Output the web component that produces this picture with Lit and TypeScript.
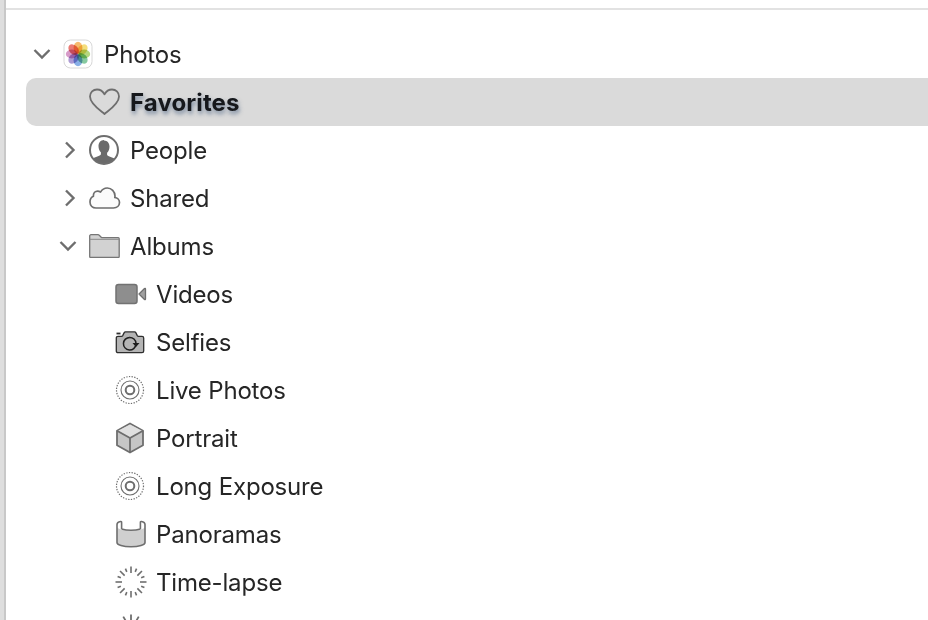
import { LitElement, html, css, svg } from "lit";
import { customElement } from "lit/decorators.js";

const ticks = (n: number, long: [number, number], short: [number, number]) => {
  const out = [];
  for (let i = 0; i < n; i++) {
    const a = (i / n) * Math.PI * 2 - Math.PI / 2;
    const [r1, r2] = i % 2 === 0 ? long : short;
    out.push(svg`<line x1=${16 + r1 * Math.cos(a)} y1=${16 + r1 * Math.sin(a)} x2=${16 + r2 * Math.cos(a)} y2=${16 + r2 * Math.sin(a)}></line>`);
  }
  return out;
};

const petals = ["#f2a035", "#f0d048", "#98c84e", "#58b47c", "#5a90dc", "#8e74c4", "#c874b4", "#e2483f"];

const ICONS: Record<string, unknown> = {
  photos: html`<svg class="i" width="32" height="32" viewBox="0 0 32 32">
    <rect x="2" y="2" width="28" height="28" rx="6.5" fill="#fff" stroke="#d8d8d8" stroke-width="1"></rect>
    ${petals.map((c, i) => svg`<ellipse class="petal" cx="16" cy="9.800" rx="4.400" ry="6" fill=${c} fill-opacity="0.72" transform=${`rotate(${i * 45} 16 16)`}></ellipse>`)}
  </svg>`,
  heart: html`<svg class="i" width="32" height="30" viewBox="0 0 32 30"><path d="M15.500 27C11.500 23.500 1 17 1 9.500 1 5.300 4.200 2.500 8 2.500c3.100 0 5.800 1.700 7.500 4.700 1.700-3 4.400-4.700 7.500-4.700 3.800 0 7 2.800 7 7 0 7.500-10.500 14-14.500 17.500z" fill="none" stroke="#6e6e6e" stroke-width="1.800" stroke-linejoin="round"></path></svg>`,
  person: html`<svg class="i" width="32" height="32" viewBox="0 0 32 32"><defs><clipPath id="pc"><circle cx="15" cy="16" r="14"></circle></clipPath></defs>
    <g clip-path="url(#pc)" fill="#6a6a6a"><path d="M15 6.500c3.400 0 5.500 2.800 5.500 6.300 0 2.600-1 4.700-2.400 6v1.900c0 1.300 5.200 2.300 8 4.300V32H4v-7.500c2.800-2 7.900-3 7.900-4.300v-1.900c-1.400-1.300-2.400-3.400-2.400-6 0-3.500 2.100-6.300 5.500-6.300z"></path></g>
    <circle cx="15" cy="16" r="14" fill="none" stroke="#6e6e6e" stroke-width="2"></circle></svg>`,
  cloud: html`<svg class="i" width="32" height="24" viewBox="0 0 32 24"><path d="M7 22h17.500c3.400 0 6-2.300 6-5.400 0-2.800-2.100-4.900-4.700-5.100.2-.6.200-1.100.2-1.500 0-4.500-3.500-8-7.700-8-3 0-5.300 1.500-6.800 4.100-.9-.7-1.900-1-2.900-1-2.400 0-4.200 1.900-4.200 4.300v.8C2.400 11 1 13.500 1 16c0 3.500 2.600 6 6 6z" fill="#fbfbfb" stroke="#6e6e6e" stroke-width="1.700" stroke-linejoin="round"></path></svg>`,
  folder: html`<svg class="i" width="32" height="24" viewBox="0 0 32 24"><path d="M.7 22.500V2C.7 1.300 1.200.7 2 .7h7c.7 0 1 .3 1.500.8l1.700 1.700c.3.300.6.500 1.100.5h15.900c.6 0 1 .4 1 1v17.800c0 .6-.4 1-1 1H1.700c-.6 0-1-.4-1-1z" fill="#d2d2d2" stroke="#767676" stroke-width="1.300"></path><path d="M.7 5.300h29.800" stroke="#8a8a8a" stroke-width="1"></path></svg>`,
  video: html`<svg class="i" width="32" height="22" viewBox="0 0 32 22"><rect x="1" y="1.500" width="21" height="19" rx="2.500" fill="#8e8e8e" stroke="#727272" stroke-width="1.500"></rect><path d="M24 11l5.500-5.500c.5-.4 1-.2 1 .5v10c0 .7-.5.9-1 .5z" fill="#a0a0a0" stroke="#6e6e6e" stroke-width="1.300" stroke-linejoin="round"></path></svg>`,
  selfie: html`<svg class="i sf" width="30" height="24" viewBox="0 0 30 24"><path d="M3 22.700c-1 0-1.700-.7-1.700-1.700V8c0-1 .7-1.700 1.700-1.700h3.500c.6 0 .9-.2 1.200-.7l1.500-3c.3-.5.600-.7 1.200-.7h9.200c.6 0 .9.200 1.200.7l1.500 3c.3.500.6.700 1.200.7H27c1 0 1.700.7 1.700 1.700v13c0 1-.7 1.700-1.700 1.700z" fill="#b4b4b4" stroke="#2e2e2e" stroke-width="1.300"></path><path d="M1.500 3.500h4" stroke="#2e2e2e" stroke-width="1.800"></path><path d="M14.800 7.400a6.300 6.300 0 1 0 6.200 7" fill="none" stroke="#1e1e1e" stroke-width="1.500"></path><path d="M14.500 7.400a6.300 6.300 0 0 1 6.500 6" fill="none" stroke="#1e1e1e" stroke-width="1.500"></path><path d="M17.500 13h7l-3.500 4z" fill="#1e1e1e"></path></svg>`,
  live: html`<svg class="i" width="30" height="30" viewBox="0 0 30 30" fill="none" stroke="#6e6e6e"><circle cx="15" cy="15" r="13.500" stroke-width="1.200" stroke-dasharray="1.300 1.400"></circle><circle cx="15" cy="15" r="9" stroke-width="1.100"></circle><circle cx="15" cy="15" r="4.300" stroke-width="2"></circle></svg>`,
  cube: html`<svg class="i" width="30" height="32" viewBox="0 0 30 32"><path d="M15 1.500l13 7.200v14.600l-13 7.200-13-7.200V8.700z" fill="#c6c6c6" stroke="#6e6e6e" stroke-width="1.800" stroke-linejoin="round"></path><path d="M15 2.500L27 8.700 15 15.500 3 8.700z" fill="#e0e0e0"></path><path d="M2 8.700L15 16l13-7.300M15 16v14.500" fill="none" stroke="#6e6e6e" stroke-width="1.800"></path></svg>`,
  pano: html`<svg class="i" width="32" height="28" viewBox="0 0 32 28"><path d="M2 7v15.500c0 2.500 6 4.300 14 4.300s14-1.800 14-4.300V7C29 9 24 10.500 16 10.500S3 9 2 7z" fill="#cfcfcf"></path><path d="M2 4.500c0-1.500 1.700-2.700 3.500-3 .7-.1 1.100.2 1.100.9v6.500M30 4.500c0-1.500-1.700-2.700-3.500-3-.7-.1-1.100.2-1.100.9v6.500M2 4.500v18c0 2.500 6 4.300 14 4.300s14-1.800 14-4.300v-18M6.600 8.900c2.500.8 5.700 1.300 9.400 1.300s6.900-.5 9.400-1.300" fill="none" stroke="#6e6e6e" stroke-width="1.600"></path></svg>`,
  timelapse: html`<svg class="i" width="32" height="32" viewBox="0 0 32 32" stroke="#6e6e6e" stroke-width="1.600">${ticks(16, [9, 15.500], [11, 14.500])}</svg>`,
  slomo: html`<svg class="i" width="32" height="32" viewBox="0 0 32 32" stroke="#6e6e6e" stroke-width="1.800">${ticks(12, [9.500, 15.500], [9.500, 15.500])}</svg>`,
};

interface Row { label?: string; icon: string; depth: number; chevron?: "down" | "right"; selected?: boolean; }

const ROWS: Row[] = [
  { label: "Photos", icon: "photos", depth: 0, chevron: "down" },
  { label: "Favorites", icon: "heart", depth: 1, selected: true },
  { label: "People", icon: "person", depth: 1, chevron: "right" },
  { label: "Shared", icon: "cloud", depth: 1, chevron: "right" },
  { label: "Albums", icon: "folder", depth: 1, chevron: "down" },
  { label: "Videos", icon: "video", depth: 2 },
  { label: "Selfies", icon: "selfie", depth: 2 },
  { label: "Live Photos", icon: "live", depth: 2 },
  { label: "Portrait", icon: "cube", depth: 2 },
  { label: "Long Exposure", icon: "live", depth: 2 },
  { label: "Panoramas", icon: "pano", depth: 2 },
  { label: "Time-lapse", icon: "timelapse", depth: 2 },
  { icon: "slomo", depth: 2 },
];

@customElement("app-root")
export class AppRoot extends LitElement {
  static styles = css`
    :host { display: block; width: 928px; height: 620px; overflow: hidden; background: #fff; font-family: Inter, "Noto Sans", sans-serif; }
    .window { display: flex; height: 620px; }
    .edge { width: 4px; background: #dedede; border-right: 2px solid #c8c8c8; flex: none; }
    .main { flex: 1; min-width: 0; }
    .top { height: 8px; border-bottom: 2px solid #e2e2e2; }
    .list { padding-top: 20px; padding-left: 20px; }
    .row { display: flex; align-items: center; height: 48px; color: #262626; font-size: 24px; letter-spacing: -0.18px; }
    .row.sel { background: #dadada; border-radius: 10px 0 0 10px; }
    .row.sel .label { font-weight: 700; letter-spacing: 0.1px; color: #16181c; text-shadow: 1px 3px 4px rgba(40, 70, 110, 0.55); }
    .chev { flex: none; display: flex; justify-content: center; }
    .ic { flex: none; display: flex; align-items: center; }
    .d0 { padding-left: 3px; }
    .d0 .chev { width: 26px; }
    .d0 .ic { width: 49px; padding-left: 7px; box-sizing: border-box; }
    .d1 { padding-left: 28px; }
    .d1 .chev { width: 28px; margin-right: 7px; }
    .d1 .chev.right { padding-left: 4px; width: 24px; }
    .d1 .ic { width: 41px; }
    .d2 { padding-left: 89px; }
    .d2 .ic { width: 41px; }
    .label { white-space: nowrap; }
    svg { display: block; }
    .petal { mix-blend-mode: multiply; }
  `;

  private chevron(c?: "down" | "right") {
    if (c === "down") return html`<svg width="18" height="12" viewBox="0 0 18 12"><path d="M1.500 2L9 9.500 16.500 2" fill="none" stroke="#6e6e6e" stroke-width="2.400"></path></svg>`;
    if (c === "right") return html`<svg width="12" height="18" viewBox="0 0 12 18"><path d="M2 1.500L9.500 9 2 16.500" fill="none" stroke="#6e6e6e" stroke-width="2.400"></path></svg>`;
    return null;
  }

  render() {
    return html`<div class="window">
      <div class="edge"></div>
      <div class="main">
        <div class="top"></div>
        <div class="list">
          ${ROWS.map(
            (r) => html`<div class="row d${r.depth} ${r.selected ? "sel" : ""}">
              ${r.depth < 2 ? html`<div class="chev ${r.chevron ?? ""}">${this.chevron(r.chevron)}</div>` : null}
              <div class="ic">${ICONS[r.icon]}</div>
              ${r.label ? html`<div class="label">${r.label}</div>` : null}
            </div>`
          )}
        </div>
      </div>
    </div>`;
  }
}
